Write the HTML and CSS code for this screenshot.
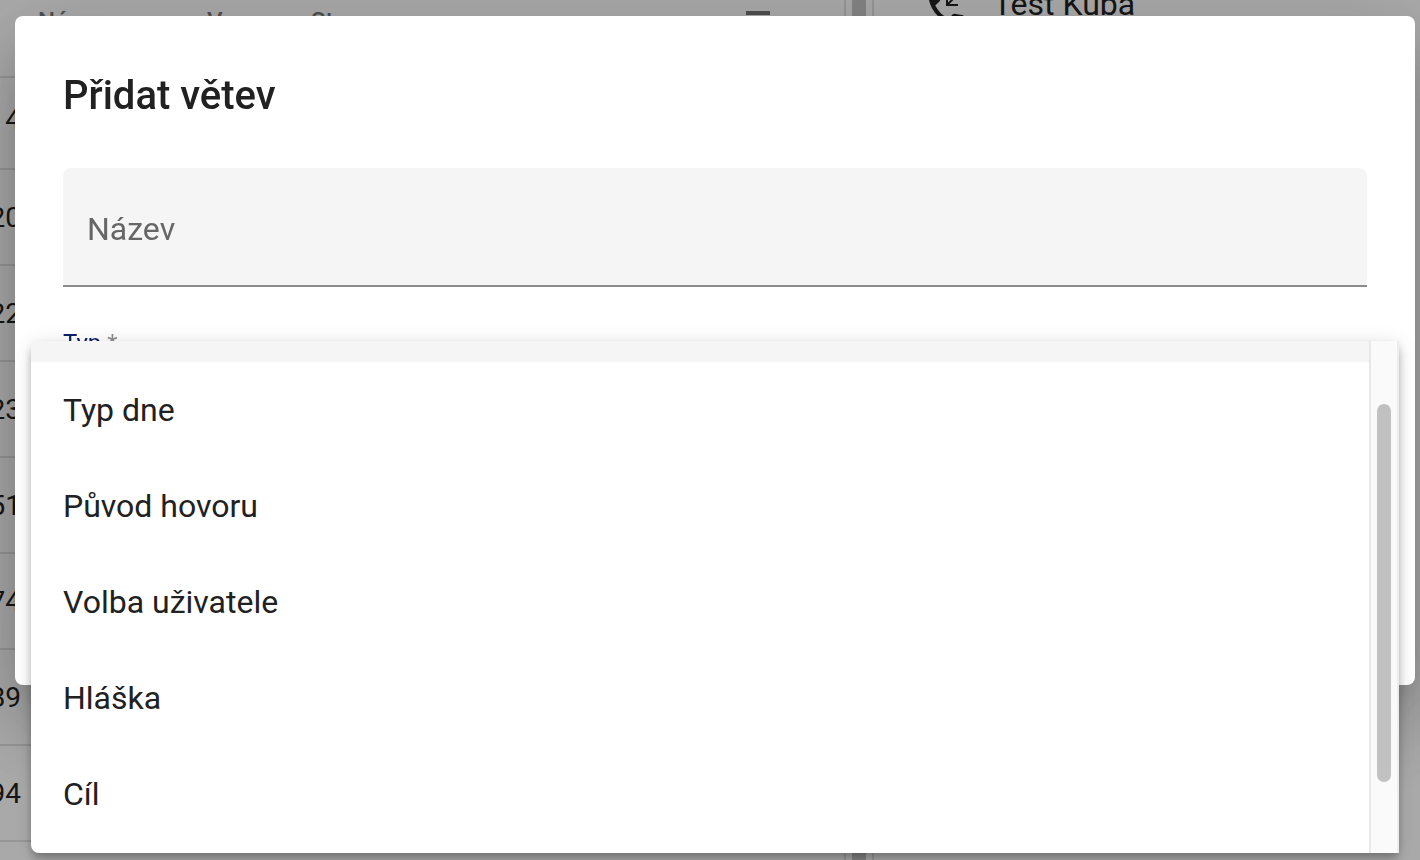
FILE: index.html
```html
<!DOCTYPE html>
<html lang="cs">
<head>
  <meta charset="utf-8">
  <title>Přidat větev</title>
  <link rel="stylesheet" href="styles.css">
</head>
<body>
  <!-- Page under the dialog -->
  <div class="page">
    <div class="list-panel">
      <table class="list">
        <thead>
          <tr>
            <th class="col-name">Název</th>
            <th class="col-version">Verze</th>
            <th>Stav</th>
            <th class="col-menu">
              <button type="button" class="icon-button" aria-label="Menu">
                <svg width="24" height="20" viewBox="0 0 24 20"><path d="M0 0h24v4H0zM0 8h24v4H0zM0 16h24v4H0z"/></svg>
              </button>
            </th>
          </tr>
        </thead>
        <tbody>
          <tr class="first"><td>4</td><td></td><td></td><td></td></tr>
          <tr><td>20</td><td></td><td></td><td></td></tr>
          <tr><td>22</td><td></td><td></td><td></td></tr>
          <tr><td>23</td><td></td><td></td><td></td></tr>
          <tr><td>51</td><td></td><td></td><td></td></tr>
          <tr><td>74</td><td></td><td></td><td></td></tr>
          <tr><td>89</td><td></td><td></td><td></td></tr>
          <tr><td>94</td><td></td><td></td><td></td></tr>
        </tbody>
      </table>
    </div>
    <div class="splitter"></div>
    <div class="detail-panel">
      <svg class="phone-icon" width="48" height="48" viewBox="0 0 24 24">
        <path d="M20 16.500c-1.25 0-2.45-.2-3.57-.57-.1-.03-.21-.05-.31-.05-.26 0-.51.1-.71.29l-2.2 2.2c-2.83-1.44-5.15-3.75-6.59-6.59l2.2-2.21c.28-.26.36-.65.25-1C8.7 7.45 8.5 6.25 8.5 5c0-.55-.45-1-1-1H4c-.55 0-1 .45-1 1 0 9.39 7.61 17 17 17 .55 0 1-.45 1-1v-3.5c0-.55-.45-1-1-1z"/>
        <path d="M12 6v6h6v-1h-4.300L21 3.700 20.300 3 13 10.300V6z"/>
      </svg>
      <span class="detail-title">Test Kuba</span>
    </div>
  </div>

  <!-- Dialog -->
  <div class="backdrop">
    <form class="dialog" role="dialog" aria-labelledby="dialog-title">
      <h1 id="dialog-title">Přidat větev</h1>
      <input class="text-field" type="text" id="name" aria-label="Název" placeholder="Název">
      <label class="type-label" for="type">Typ <span>*</span></label>
      <select class="type-select" id="type"></select>

      <!-- Opened options of the type field -->
      <div class="menu">
        <div class="menu-list" role="listbox" aria-label="Typ">
          <button type="button" role="option" class="option selected" aria-selected="true"></button>
          <button type="button" role="option" class="option">Typ dne</button>
          <button type="button" role="option" class="option">Původ hovoru</button>
          <button type="button" role="option" class="option">Volba uživatele</button>
          <button type="button" role="option" class="option">Hláška</button>
          <button type="button" role="option" class="option">Cíl</button>
        </div>
        <div class="scrollbar"><div class="thumb"></div></div>
      </div>
    </form>
  </div>
</body>
</html>
```

FILE: styles.css
```css
* {
  box-sizing: border-box;
}

body {
  margin: 0;
  height: 100vh;
  overflow: hidden;
  background: #fafafa;
  color: #212121;
  font-family: Roboto, "Liberation Sans", sans-serif;
  font-size: 32px;
}

/* Page under the dialog */
.page {
  display: flex;
  height: 100vh;
}

.list-panel {
  width: 844px;
  overflow: hidden;
}

.list {
  width: 100%;
  table-layout: fixed;
  border-collapse: separate;
  border-spacing: 0;
  font-size: 28px;
}

.list th {
  height: 78px;
  padding: 7px 0 0;
  border-bottom: 2px solid #dedede;
  vertical-align: top;
  text-align: left;
  font-size: 24px;
  font-weight: 500;
  line-height: 28px;
  color: #757575;
}

.list .col-name {
  width: 207px;
  padding-left: 38px;
}

.col-version {
  width: 104px;
}

.list .col-menu {
  width: 98px;
  padding-top: 11px;
}

.list td {
  height: 96px;
  padding: 0;
  border-bottom: 2px solid #dedede;
}

/* numbers end at the left side of the name column */
.list td:first-child {
  display: flex;
  align-items: center;
  justify-content: flex-end;
  padding-right: 186px;
}

.list .first td {
  height: 92px;
  padding-bottom: 8px;
}

.icon-button {
  display: block;
  padding: 0;
  border: none;
  background: none;
  color: #757575;
  fill: currentColor;
}

.icon-button svg {
  display: block;
}

.splitter {
  width: 30px;
  border: 2px solid #dedede;
  border-width: 0 2px;
  background: linear-gradient(#c2c2c2, #c2c2c2) center / 14px 100% no-repeat;
}

.detail-panel {
  flex: 1;
  display: flex;
  align-items: center;
  gap: 23px;
  height: 48px;
  margin-top: -18px;
  padding-left: 48px;
}

.detail-title {
  padding-bottom: 4px;
}

.phone-icon {
  fill: #212121;
}

/* Dialog */
.backdrop {
  position: fixed;
  inset: 0;
  padding: 16px 5px 0 15px;
  background: rgba(0, 0, 0, 0.32);
}

.dialog {
  position: relative;
  display: flex;
  flex-direction: column;
  min-height: 669px;
  padding: 48px;
  border-radius: 8px;
  background: #fff;
  box-shadow: 0 22px 30px -14px rgba(0, 0, 0, 0.2),
              0 48px 76px 6px rgba(0, 0, 0, 0.14),
              0 18px 92px 16px rgba(0, 0, 0, 0.12);
}

h1 {
  margin: 0 0 40px;
  font-size: 40px;
  font-weight: 500;
  line-height: 64px;
}

.text-field {
  height: 119px;
  padding: 4px 24px 0;
  border: none;
  border-bottom: 2px solid #8c8c8c;
  border-radius: 8px 8px 0 0;
  background: #f5f5f5;
  font: inherit;
}

.text-field::placeholder {
  color: #666;
  opacity: 1;
}

.type-label {
  margin-top: 42px;
  font-size: 24px;
  line-height: 28px;
  color: #0d1f6b;
}

.type-label span {
  color: #8c8c8c;
}

.type-select {
  height: 48px;
  border: none;
  border-bottom: 2px solid #0d1f6b;
  background: #fff;
  font: inherit;
}

/* Options menu */
.menu {
  position: absolute;
  top: 325px;
  left: 16px;
  right: 16px;
  display: flex;
  height: 512px;
  overflow: hidden;
  border-radius: 8px 0 0 8px;
  background: #fff;
  box-shadow: 0 4px 8px -2px rgba(0, 0, 0, 0.2),
              0 8px 10px 0 rgba(0, 0, 0, 0.14),
              0 2px 20px 0 rgba(0, 0, 0, 0.12);
}

.menu-list {
  flex: 1;
  display: flex;
  flex-direction: column;
  justify-content: flex-end;
  padding-bottom: 11px;
}

.option {
  flex: none;
  height: 96px;
  padding: 0 32px;
  border: none;
  background: #fff;
  color: #212121;
  font: inherit;
  text-align: left;
}

.option.selected {
  background: #f5f5f5;
}

.scrollbar {
  width: 30px;
  padding: 63px 6px 71px;
  border-left: 2px solid #e8e8e8;
  border-right: 2px solid #ededed;
  background: #fafafa;
}

.thumb {
  width: 14px;
  height: 100%;
  border-radius: 7px;
  background: #c1c1c1;
}
```
